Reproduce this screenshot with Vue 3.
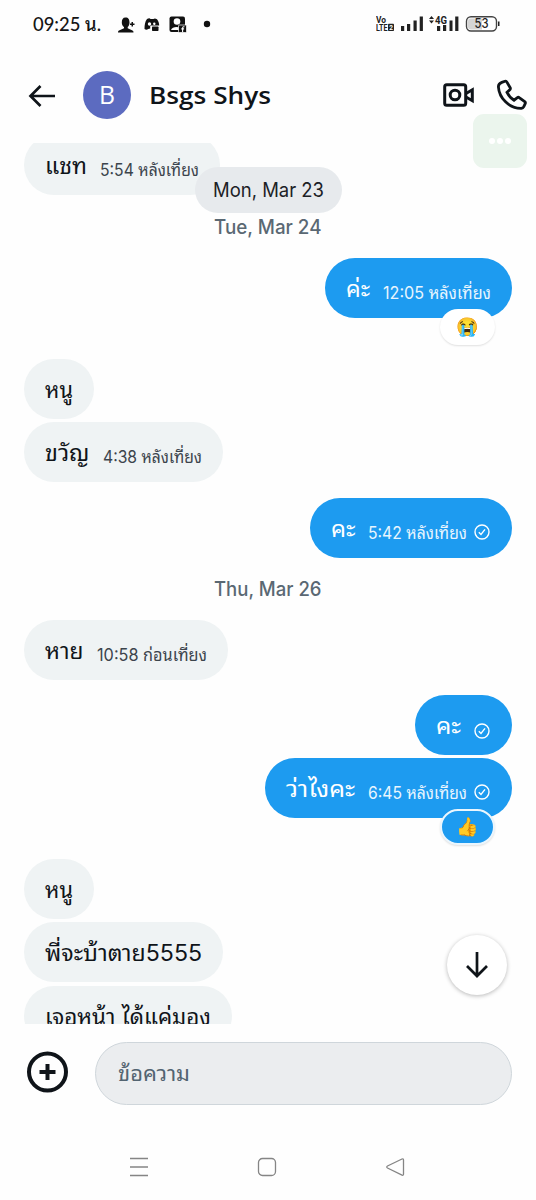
<script setup>
import { h } from 'vue'

// Single-line label fitted to a given advance width, positioned on its baseline.
const Label = (p) =>
  h('svg', { width: p.w, height: p.tall || 60, overflow: 'visible' }, [
    h('text', { x: 0, y: p.base, textLength: p.w, lengthAdjust: 'spacingAndGlyphs' }, p.text),
  ])
Label.props = ['w', 'tall', 'base', 'text']

const messages = [
  { text: 'แชท', w: 42, time: '5:54 หลังเที่ยง', tw: 99, cls: 'first' },
  { date: 'Tue, Mar 24', cls: 'tue' },
  { text: 'ค่ะ', w: 24, time: '12:05 หลังเที่ยง', tw: 108, own: true, emoji: '😭' },
  { text: 'หนู', w: 28, cls: 'block' },
  { text: 'ขวัญ', w: 44.5, time: '4:38 หลังเที่ยง', tw: 99, cls: 'next' },
  { text: 'คะ', w: 24.5, time: '5:42 หลังเที่ยง', tw: 99, own: true, read: true, cls: 'reply' },
  { date: 'Thu, Mar 26', cls: 'thu' },
  { text: 'หาย', w: 38.5, time: '10:58 ก่อนเที่ยง', tw: 110 },
  { text: 'คะ', w: 25, own: true, read: true, cls: 'reply' },
  { text: 'ว่าไงคะ', w: 69, time: '6:45 หลังเที่ยง', tw: 99, own: true, read: true, emoji: '👍', cls: 'next' },
  { text: 'หนู', w: 28, cls: 'block' },
  { text: 'พี่จะบ้าตาย5555', w: 157, cls: 'next' },
  { text: 'เจอหน้า ได้แค่มอง', w: 166, cls: 'next' },
]
</script>

<template>
  <div class="phone">
    <div class="status">
      <Label class="clock" :w="68" :tall="48" :base="30.5" text="09:25 น." />
      <svg class="notes" width="100" height="48" viewBox="0 0 100 48">
        <path d="M8.500 17.500c3 0 4 2 4 5 0 2-.6 3.400-1.800 4.600v1.200l4.800 2.300c.8.500 1 1 1 1.800H1c0-1 .4-1.500 1-1.800l5-2.300v-1.200c-1.500-1.200-2.200-2.700-2.200-4.600 0-3 1-5 3.700-5z" />
        <path d="M14.500 22h1.500v1.500h1.500v1.500H16v1.500h-1.500V25H13v-1.500h1.500z" />
        <path d="M30 19c2-1 3-.8 3.500 0h3c1-1 2-.7 3.500.2 1.500 2 2.200 4 2.200 6.300h-8c-.6 0-1 .5-1 1v2l-2 .5c-1 .7-2.200 1-3.700 0 0-4 .5-7.500 2.500-10z" />
        <circle cx="32.500" cy="24" r="1.700" fill="#fff" /><circle cx="37.300" cy="23.700" r="1.200" fill="#fff" />
        <rect x="35" y="26.500" width="6.500" height="4.500" rx=".7" />
        <rect x="52.500" y="16.500" width="15.500" height="15.500" rx="2" />
        <circle cx="60" cy="21.500" r="3.300" fill="#fff" /><path d="M54 30c1-4 10-4 11 0z" fill="#fff" />
        <rect x="61.500" y="25" width="8" height="7.500" rx="1" stroke="#fff" stroke-width=".7" />
        <path d="M67.500 26.700h-.8c-.8 0-1.100.4-1.100 1.200V32M64.300 28.900h2.800" fill="none" stroke="#fff" stroke-width="1.100" />
        <circle cx="90" cy="24" r="3.200" />
      </svg>
      <svg class="signals" width="126" height="48" viewBox="0 0 126 48">
        <text class="tiny" x="0" y="22.500" textLength="10" lengthAdjust="spacingAndGlyphs">Vo</text>
        <text class="tiny" x="0" y="31" textLength="11.500" lengthAdjust="spacingAndGlyphs">LTE</text>
        <rect x="12" y="23.800" width="6" height="7.200" rx=".8" />
        <text class="sim" x="13.200" y="29.800">2</text>
        <path d="M25 26h3.200v5H25zM31 24h3.200v7H31zM37.500 20.500h3.200V31h-3.200zM43.700 16.500h3.200V31h-3.200z" />
        <path d="M53 19l2.500-3 2.500 3zM53 20.500h5l-2.500 3z" />
        <text class="gen" x="59" y="23.500" textLength="12" lengthAdjust="spacingAndGlyphs">4G</text>
        <path d="M61 26h3.200v5H61zM67 25h3.200v6H67zM73.500 20.500h3V31h-3zM79.200 16.500h3.200V31h-3.200z" />
        <rect x="90.500" y="16.700" width="30" height="14.300" rx="4.500" fill="#fff" stroke="#444" stroke-width="1.400" />
        <path d="M95 18.500h11v11H95q-3 0-3-3v-5q0-3 3-3z" fill="#d4d4d4" />
        <path d="M122 21.500h1.500v4.500H122z" />
        <text class="charge" x="98.500" y="28.300" textLength="14" lengthAdjust="spacingAndGlyphs">53</text>
      </svg>
    </div>

    <header class="header">
      <svg class="back" width="28" height="24" viewBox="0 0 28 24"><path d="M27 12H3M12.500 2L2.500 12l10 10" /></svg>
      <div class="avatar"><Label :w="16" :tall="48" :base="33" text="B" /></div>
      <Label class="name" :w="122" :tall="48" :base="32.5" text="Bsgs Shys" />
      <svg class="video" width="32" height="24" viewBox="0 0 32 24">
        <rect x="1.700" y="1.700" width="21" height="20.500" rx="2" /><circle cx="12" cy="12" r="4.800" />
        <path d="M23 10.500l6.300-3.700v10.900L23 14" />
      </svg>
      <svg class="call" width="32" height="32" viewBox="0 0 32 32">
        <path d="M5.800 3.400L9 2.300q1.200-.4 1.900.8l3.300 5.600q.5 1-.2 1.800L11 13.400q2.400 5 7 7.800l3.400-2.600q.9-.7 1.800 0l5.500 4q1.100.9.500 2.100l-1.400 3q-.8 1.500-2.400 1.600C13 29.600 3.200 19 2.400 7.800q0-3.300 3.400-4.400z" />
      </svg>
      <div class="assist"><i></i><i></i><i></i></div>
    </header>

    <main class="chat">
      <div class="pinned"><Label :w="111" :tall="46" :base="30" text="Mon, Mar 23" /></div>
      <template v-for="(m, i) in messages" :key="i">
        <div v-if="m.date" class="date" :class="m.cls"><Label :w="107.5" :tall="30" :base="22" :text="m.date" /></div>
        <div v-else class="row" :class="[m.cls, { own: m.own }]">
          <div class="bubble">
            <Label class="body" :w="m.w" :base="38.7" :text="m.text" />
            <Label v-if="m.time" class="time" :w="m.tw" :base="41" :text="m.time" />
            <svg v-if="m.read" class="read" :class="{ solo: !m.time }" width="16" height="16" viewBox="0 0 16 16">
              <circle cx="8" cy="8" r="7" /><path d="M4.800 8.200l2.200 2.200 4-5" />
            </svg>
            <div v-if="m.emoji" class="reaction" :class="{ mine: m.emoji === '👍' }">{{ m.emoji }}</div>
          </div>
        </div>
      </template>
      <div class="jump">
        <svg width="24" height="28" viewBox="0 0 24 28"><path d="M12 1v24M2 15l10 10 10-10" /></svg>
      </div>
    </main>

    <footer class="composer">
      <svg class="add" width="42" height="42" viewBox="0 0 42 42"><circle cx="21.500" cy="21" r="18.500" /><path d="M21.500 13v16M13.500 21h16" /></svg>
      <div class="field"><Label :w="72" :tall="60" :base="37.5" text="ข้อความ" /></div>
    </footer>

    <nav class="nav">
      <svg width="20" height="20" viewBox="0 0 20 20"><path d="M1 1.500h18M1 10h18M1 18.500h18" /></svg>
      <svg width="20" height="20" viewBox="0 0 20 20"><rect x="1.500" y="1.500" width="17" height="17" rx="4" /></svg>
      <svg width="20" height="20" viewBox="0 0 20 20"><path d="M17 2L2.500 9q-1.500 1 0 2L17 18.200q1.500.4 1.500-1.200V3q0-1.500-1.500-1z" /></svg>
    </nav>
  </div>
</template>

<style>
body { background: #fff; }
</style>

<style scoped>
.phone {
  width: 536px; height: 1200px; overflow: hidden; background: #fefefe; color: #0f1419;
  font-family: Inter, "Noto Sans Thai Looped", "Noto Looped Thai", Loma, Garuda, Waree, "Droid Sans Thai", sans-serif;
  display: flex; flex-direction: column;
}
svg { display: block; flex: none; }
.status { height: 48px; flex: none; display: flex; padding-left: 33px; }
.clock { font: 500 19.500px Lato, "Noto Sans Thai Looped", Loma, Garuda, Waree, sans-serif; fill: #151515; }
.notes { margin-left: 16px; fill: #111; }
.signals { margin-left: 158.500px; fill: #222; }
.tiny { font: 700 9px Roboto, sans-serif; }
.sim { font: 700 6.500px Roboto, sans-serif; fill: #fff; }
.gen { font: 700 10.500px Roboto, sans-serif; }
.charge { font: 500 12.500px Inter, sans-serif; }

.header { position: relative; height: 95px; flex: none; box-sizing: border-box; padding: 23px 8px 0 28px; display: flex; }
.back { margin-top: 12.500px; fill: none; stroke: #0f1419; stroke-width: 2.700; }
.avatar {
  width: 48px; height: 48px; margin-left: 27px; border-radius: 50%; background: #5c6bc0;
  display: flex; justify-content: center; fill: #fff; font: 400 25px "Open Sans", sans-serif;
}
.name { margin-left: 18px; font: 600 24px "Open Sans", sans-serif; fill: #0f1419; }
.video { margin: 12px 0 0 auto; fill: none; stroke: #0f1419; stroke-width: 3; }
.call { margin: 8px 0 0 21px; fill: none; stroke: #0f1419; stroke-width: 2.800; }
.assist {
  position: absolute; right: 9px; top: 66px; width: 54px; height: 54px; border-radius: 11px; z-index: 2;
  background: #ebf5ed; display: flex; align-items: center; justify-content: center; gap: 2px;
}
.assist i { width: 6px; height: 6px; border-radius: 50%; background: #fff; }

.chat { position: relative; height: 881px; flex: none; overflow: hidden; }
.pinned {
  position: absolute; left: 195px; top: 24px; width: 147px; height: 46px; border-radius: 23px; z-index: 1;
  background: #e7eaed; display: flex; justify-content: center; fill: #1c2126; font-size: 20px;
}
.date { height: 30px; display: flex; justify-content: center; fill: #5a6873; font-size: 19.500px; font-weight: 500; }
.tue { margin: 17px 0 16px; }
.thu { margin: 16px 0; }
.row { display: flex; padding: 0 24px; }
.own { justify-content: flex-end; }
.first { margin-top: -8px; }
.next { margin-top: 3.200px; }
.reply { margin-top: 15.200px; }
.block { margin-top: 41.200px; }
.bubble { position: relative; height: 60px; padding: 0 21px; border-radius: 30px; background: #eff3f4; display: flex; }
.own .bubble { background: #1d9bf0; }
.body { font-size: 22.500px; fill: #0f1419; }
.time { margin-left: 13px; font-size: 17px; fill: #3c444c; }
.own .body { fill: #fff; }
.own .time { fill: #e8f5fe; }
.read { margin: 26px 1px 0 7px; fill: none; stroke: #fff; stroke-width: 1.400; }
.solo { margin: 28px 1px 0 13px; }
.reaction {
  position: absolute; right: 17px; top: 51px; width: 55px; height: 36px; box-sizing: border-box; border-radius: 18px;
  background: #fff; box-shadow: 0 1px 2px rgba(0, 0, 0, .12); z-index: 1;
  display: flex; align-items: center; justify-content: center; font: 18px/1 "Noto Color Emoji", sans-serif;
}
.mine { background: #1d9bf0; border: 2px solid #eaf6fe; }
.jump {
  position: absolute; right: 29px; top: 792px; width: 60px; height: 60px; border-radius: 50%;
  background: #fff; box-shadow: 0 1px 4px rgba(0, 0, 0, .28); display: flex; align-items: center; justify-content: center;
}
.jump svg { fill: none; stroke: #0f1419; stroke-width: 2.700; }

.composer { height: 81px; flex: none; box-sizing: border-box; padding: 18px 24px 0 26px; display: flex; }
.add { margin-top: 9px; fill: none; stroke: #0f1419; stroke-width: 4; }
.field {
  flex: 1; height: 63px; box-sizing: border-box; margin-left: 27px; padding-left: 22px; border: 1.500px solid #cfd6db;
  border-radius: 32px; background: #ebedef; fill: #536471; font-size: 21px;
}
.nav { display: flex; gap: 108px; padding: 52px 0 0 129px; }
.nav svg { fill: none; stroke: #858585; stroke-width: 1.300; }
</style>
